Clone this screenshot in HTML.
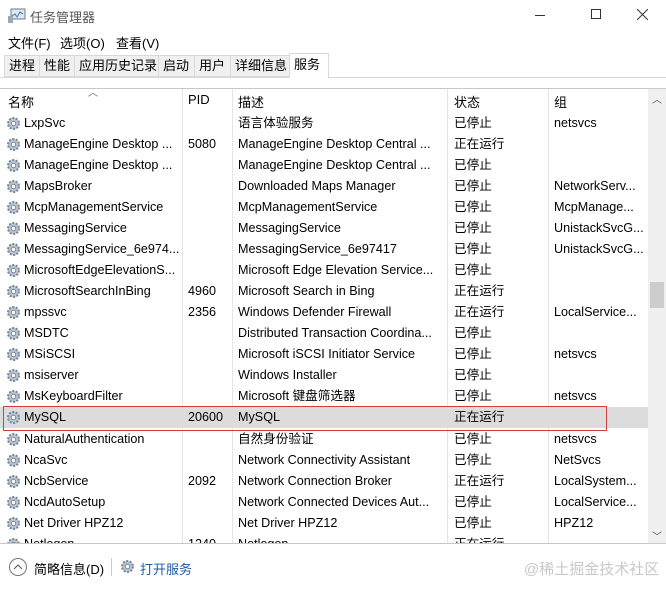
<!DOCTYPE html>
<html><head><meta charset="utf-8"><style>
*{margin:0;padding:0;box-sizing:border-box}
body{width:666px;height:593px;background:#fff;font-family:"Liberation Sans","Noto Sans CJK SC",sans-serif;font-size:13px;color:#000;position:relative;overflow:hidden}
.a{position:absolute;white-space:nowrap}
.tab{position:absolute;top:55px;height:22px;background:#f0f0f0;border:1px solid #d9d9d9;font-size:13px;line-height:20px;padding-left:4px}
.row{position:absolute;left:0;width:648px;height:21px;line-height:23px;font-size:12.6px}
.row span{position:absolute;white-space:nowrap}
.g{position:absolute;left:6px;top:4px;width:15px;height:15px}
</style></head><body>
<svg class="a" style="left:8px;top:8px" width="18" height="16" viewBox="0 0 18 16"><rect x="3" y="1" width="14" height="10" fill="#dfe8f0" stroke="#6b7c8c"/><polyline points="4,8 7,6 9,9 12,4 15,6" fill="none" stroke="#3a7ab8"/><rect x="0" y="8" width="5" height="7" fill="#9aa8b4"/></svg>
<div class="a" style="left:30px;top:7px;color:#555;font-size:13px">任务管理器</div>
<div class="a" style="left:535px;top:15px;width:10px;height:1px;background:#333"></div>
<div class="a" style="left:591px;top:9px;width:10px;height:10px;border:1px solid #333"></div>
<svg class="a" style="left:637px;top:9px" width="11" height="11"><path d="M0 0L11 11M11 0L0 11" stroke="#333"/></svg>
<div class="a" style="left:8px;top:33px">文件(F)</div>
<div class="a" style="left:60px;top:33px">选项(O)</div>
<div class="a" style="left:116px;top:33px">查看(V)</div>
<div class="a" style="left:0;top:77px;width:666px;height:1px;background:#d9d9d9"></div>
<div class="tab" style="left:4px;width:36px">进程</div>
<div class="tab" style="left:39px;width:36px">性能</div>
<div class="tab" style="left:74px;width:85px">应用历史记录</div>
<div class="tab" style="left:158px;width:37px">启动</div>
<div class="tab" style="left:194px;width:37px">用户</div>
<div class="tab" style="left:230px;width:60px">详细信息</div>
<div class="tab" style="left:289px;top:53px;height:25px;width:40px;background:#fff;border-bottom:none;line-height:22px">服务</div>
<div class="a" style="left:0;top:88px;width:666px;height:1px;background:#c8c8c8"></div>
<div class="a" style="left:88px;top:84px;font-size:10px;color:#666">︿</div>
<div class="a" style="left:8px;top:92px">名称</div>
<div class="a" style="left:188px;top:92px">PID</div>
<div class="a" style="left:238px;top:92px">描述</div>
<div class="a" style="left:454px;top:92px">状态</div>
<div class="a" style="left:554px;top:92px">组</div>
<div class="a" style="left:182px;top:89px;width:1px;height:454px;background:#e5e5e5"></div>
<div class="a" style="left:232px;top:89px;width:1px;height:454px;background:#e5e5e5"></div>
<div class="a" style="left:447px;top:89px;width:1px;height:454px;background:#e5e5e5"></div>
<div class="a" style="left:548px;top:89px;width:1px;height:454px;background:#e5e5e5"></div>
<div class="a" style="left:648px;top:89px;width:18px;height:454px;background:#f0f0f0"></div>
<div class="a" style="left:652px;top:91px;font-size:10px;color:#555">︿</div>
<div class="a" style="left:652px;top:528px;font-size:10px;color:#555">﹀</div>
<div class="a" style="left:650px;top:282px;width:14px;height:26px;background:#cdcdcd"></div>
<div class="a" style="left:0;top:407px;width:648px;height:21px;background:#dcdcdc"></div>
<div class="a" style="left:3px;top:406px;width:604px;height:25px;border:1px solid #d04040"></div>
<div class="row" style="top:112px"><svg class="g"><use href="#gear"/></svg><span style="left:24px">LxpSvc</span><span style="left:238px">语言体验服务</span><span style="left:454px">已停止</span><span style="left:554px">netsvcs</span></div>
<div class="row" style="top:133px"><svg class="g"><use href="#gear"/></svg><span style="left:24px">ManageEngine Desktop ...</span><span style="left:188px">5080</span><span style="left:238px">ManageEngine Desktop Central ...</span><span style="left:454px">正在运行</span></div>
<div class="row" style="top:154px"><svg class="g"><use href="#gear"/></svg><span style="left:24px">ManageEngine Desktop ...</span><span style="left:238px">ManageEngine Desktop Central ...</span><span style="left:454px">已停止</span></div>
<div class="row" style="top:175px"><svg class="g"><use href="#gear"/></svg><span style="left:24px">MapsBroker</span><span style="left:238px">Downloaded Maps Manager</span><span style="left:454px">已停止</span><span style="left:554px">NetworkServ...</span></div>
<div class="row" style="top:196px"><svg class="g"><use href="#gear"/></svg><span style="left:24px">McpManagementService</span><span style="left:238px">McpManagementService</span><span style="left:454px">已停止</span><span style="left:554px">McpManage...</span></div>
<div class="row" style="top:217px"><svg class="g"><use href="#gear"/></svg><span style="left:24px">MessagingService</span><span style="left:238px">MessagingService</span><span style="left:454px">已停止</span><span style="left:554px">UnistackSvcG...</span></div>
<div class="row" style="top:238px"><svg class="g"><use href="#gear"/></svg><span style="left:24px">MessagingService_6e974...</span><span style="left:238px">MessagingService_6e97417</span><span style="left:454px">已停止</span><span style="left:554px">UnistackSvcG...</span></div>
<div class="row" style="top:259px"><svg class="g"><use href="#gear"/></svg><span style="left:24px">MicrosoftEdgeElevationS...</span><span style="left:238px">Microsoft Edge Elevation Service...</span><span style="left:454px">已停止</span></div>
<div class="row" style="top:280px"><svg class="g"><use href="#gear"/></svg><span style="left:24px">MicrosoftSearchInBing</span><span style="left:188px">4960</span><span style="left:238px">Microsoft Search in Bing</span><span style="left:454px">正在运行</span></div>
<div class="row" style="top:301px"><svg class="g"><use href="#gear"/></svg><span style="left:24px">mpssvc</span><span style="left:188px">2356</span><span style="left:238px">Windows Defender Firewall</span><span style="left:454px">正在运行</span><span style="left:554px">LocalService...</span></div>
<div class="row" style="top:322px"><svg class="g"><use href="#gear"/></svg><span style="left:24px">MSDTC</span><span style="left:238px">Distributed Transaction Coordina...</span><span style="left:454px">已停止</span></div>
<div class="row" style="top:343px"><svg class="g"><use href="#gear"/></svg><span style="left:24px">MSiSCSI</span><span style="left:238px">Microsoft iSCSI Initiator Service</span><span style="left:454px">已停止</span><span style="left:554px">netsvcs</span></div>
<div class="row" style="top:364px"><svg class="g"><use href="#gear"/></svg><span style="left:24px">msiserver</span><span style="left:238px">Windows Installer</span><span style="left:454px">已停止</span></div>
<div class="row" style="top:385px"><svg class="g"><use href="#gear"/></svg><span style="left:24px">MsKeyboardFilter</span><span style="left:238px">Microsoft 键盘筛选器</span><span style="left:454px">已停止</span><span style="left:554px">netsvcs</span></div>
<div class="row" style="top:406px"><svg class="g"><use href="#gear"/></svg><span style="left:24px">MySQL</span><span style="left:188px">20600</span><span style="left:238px">MySQL</span><span style="left:454px">正在运行</span></div>
<div class="row" style="top:428px"><svg class="g"><use href="#gear"/></svg><span style="left:24px">NaturalAuthentication</span><span style="left:238px">自然身份验证</span><span style="left:454px">已停止</span><span style="left:554px">netsvcs</span></div>
<div class="row" style="top:449px"><svg class="g"><use href="#gear"/></svg><span style="left:24px">NcaSvc</span><span style="left:238px">Network Connectivity Assistant</span><span style="left:454px">已停止</span><span style="left:554px">NetSvcs</span></div>
<div class="row" style="top:470px"><svg class="g"><use href="#gear"/></svg><span style="left:24px">NcbService</span><span style="left:188px">2092</span><span style="left:238px">Network Connection Broker</span><span style="left:454px">正在运行</span><span style="left:554px">LocalSystem...</span></div>
<div class="row" style="top:491px"><svg class="g"><use href="#gear"/></svg><span style="left:24px">NcdAutoSetup</span><span style="left:238px">Network Connected Devices Aut...</span><span style="left:454px">已停止</span><span style="left:554px">LocalService...</span></div>
<div class="row" style="top:512px"><svg class="g"><use href="#gear"/></svg><span style="left:24px">Net Driver HPZ12</span><span style="left:238px">Net Driver HPZ12</span><span style="left:454px">已停止</span><span style="left:554px">HPZ12</span></div>
<div class="a" style="left:0;top:533px;width:648px;height:10px;overflow:hidden"><div class="row" style="top:0"><svg class="g"><use href="#gear"/></svg><span style="left:24px">Netlogon</span><span style="left:188px">1240</span><span style="left:238px">Netlogon</span><span style="left:454px">正在运行</span></div></div>
<svg width="0" height="0" style="position:absolute"><defs><g id="gear"><circle cx="7.5" cy="7.5" r="5.5" fill="#b8c4d0" stroke="#7a8796" stroke-dasharray="2 1.5" stroke-width="2"/><circle cx="7.5" cy="7.5" r="2.2" fill="#fff" stroke="#7a8796"/></g></defs></svg>
<div class="a" style="left:0;top:543px;width:666px;height:1px;background:#c8c8c8"></div>
<div class="a" style="left:9px;top:558px;width:18px;height:18px;border:1px solid #777;border-radius:50%"></div>
<svg class="a" style="left:13px;top:562px" width="10" height="10"><path d="M1 7L5 3L9 7" fill="none" stroke="#555"/></svg>
<div class="a" style="left:34px;top:559px">简略信息(D)</div>
<div class="a" style="left:111px;top:558px;width:1px;height:18px;background:#ccc"></div>
<svg class="a" style="left:120px;top:559px" width="16" height="16"><use href="#gear"/></svg>
<div class="a" style="left:140px;top:559px;color:#1a5aa8">打开服务</div>
<div class="a" style="left:524px;top:558px;color:#c8c8c8;font-size:15px">@稀土掘金技术社区</div>
</body></html>
